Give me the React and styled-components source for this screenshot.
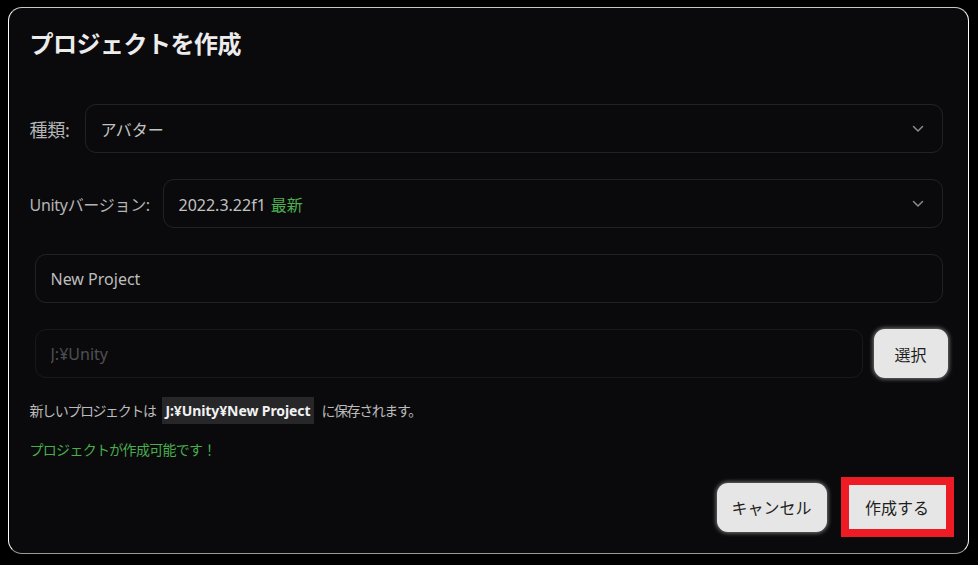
import React, { useState } from "react";
import styled, { createGlobalStyle } from "styled-components";

const GlobalStyle = createGlobalStyle`
  html, body {
    margin: 0;
    padding: 0;
    background: #000;
  }
  * {
    box-sizing: border-box;
  }
`;

const FONT = `"Noto Sans", "Noto Sans CJK JP", sans-serif`;

const Page = styled.div`
  width: 978px;
  height: 565px;
  padding: 7px 9px 11px 8px;
  background: #000;
  font-family: ${FONT};
`;

const Dialog = styled.div`
  width: 961px;
  height: 547px;
  background: #0a0a0c;
  border: 1.5px solid #ffffff;
  border-top-color: #c8c8c8;
  border-bottom-color: #9a9a9a;
  border-radius: 14px;
  padding: 20px 20.5px 0 20.5px;
  display: flex;
  flex-direction: column;
`;

const Title = styled.h1`
  margin: 0 0 44px 0;
  font-size: 24px;
  line-height: 32px;
  font-weight: 700;
  letter-spacing: -0.5px;
  color: #ececec;
`;

const FieldRow = styled.div`
  display: flex;
  align-items: center;
  gap: 10px;
  margin-right: 5px;
  margin-bottom: 26px;
`;

const Label = styled.span`
  flex: none;
  width: ${(p) => p.$w}px;
  font-size: ${(p) => p.$size || 16}px;
  letter-spacing: -0.3px;
  color: #b4b4b4;
  white-space: nowrap;
`;

const Select = styled.div`
  flex: 1;
  height: 49px;
  border: 1px solid #222226;
  border-radius: 11px;
  display: flex;
  align-items: center;
  justify-content: space-between;
  padding: 0 18px 0 15px;
  font-size: 16px;
  color: #c2c2c2;
`;

const Latest = styled.span`
  color: #4cae4f;
  margin-left: 5px;
`;

const TextInput = styled.input`
  flex: 1;
  width: 100%;
  height: 49px;
  background: transparent;
  border: 1px solid ${(p) => (p.$dim ? "#19191c" : "#222226")};
  border-radius: 11px;
  padding: 0 15px;
  font-family: ${FONT};
  font-size: 16px;
  color: #bdbdbd;
  outline: none;

  &::placeholder {
    color: #4f4f52;
  }
`;

const InputRow = styled.div`
  display: flex;
  align-items: center;
  gap: 11px;
  margin-left: 5px;
  margin-right: ${(p) => (p.$full ? "0" : "5px")};
  margin-bottom: ${(p) => (p.$full ? "19px" : "26px")};
`;

const LightButton = styled.button`
  height: 49px;
  width: ${(p) => p.$w}px;
  border: none;
  border-radius: 11px;
  background: #e6e6e6;
  box-shadow: 0 0 4px 1px rgba(255, 255, 255, 0.45);
  font-family: ${FONT};
  font-size: 16px;
  color: #1e1e1e;
  cursor: pointer;
`;

const InfoLine = styled.div`
  font-size: 14px;
  line-height: 27px;
  letter-spacing: -1.4px;
  color: #bbbbbb;
  display: flex;
  align-items: center;
`;

const Code = styled.span`
  display: inline-block;
  background: #27272a;
  color: #f2f2f2;
  font-weight: 700;
  letter-spacing: -0.1px;
  padding: 0 4px;
  margin: 0 7px 0 6px;
  height: 27px;
`;

const Status = styled.div`
  margin-top: 16px;
  font-size: 14px;
  line-height: 20px;
  letter-spacing: -0.7px;
  color: #49ad4c;
`;

const Footer = styled.div`
  margin-top: 17px;
  margin-right: -6px;
  display: flex;
  justify-content: flex-end;
  align-items: center;
  gap: 14px;
`;

const Highlight = styled.div`
  border: 8px solid #ed1c24;
  display: flex;
`;

const PrimaryButton = styled.button`
  width: 97px;
  height: 44px;
  border: none;
  background: #e6e6e6;
  font-family: ${FONT};
  font-size: 16px;
  color: #1e1e1e;
  cursor: pointer;
`;

const Chevron = () => (
  <svg width="12" height="8" viewBox="0 0 12 8" fill="none">
    <path d="M1.5 1.5 L6 6 L10.5 1.5" stroke="#8a8a8e" strokeWidth="1.5" strokeLinecap="round" strokeLinejoin="round" />
  </svg>
);

const App = () => {
  const [name, setName] = useState("New Project");
  const [path, setPath] = useState("");

  return (
    <Page>
      <GlobalStyle />
      <Dialog>
        <Title>プロジェクトを作成</Title>

        <FieldRow>
          <Label $w={45} $size={18}>種類:</Label>
          <Select>
            <span>アバター</span>
            <Chevron />
          </Select>
        </FieldRow>

        <FieldRow>
          <Label $w={123}>Unityバージョン:</Label>
          <Select>
            <span>
              2022.3.22f1<Latest>最新</Latest>
            </span>
            <Chevron />
          </Select>
        </FieldRow>

        <InputRow>
          <TextInput value={name} onChange={(e) => setName(e.target.value)} />
        </InputRow>

        <InputRow $full>
          <TextInput $dim placeholder="J:¥Unity" value={path} onChange={(e) => setPath(e.target.value)} />
          <LightButton $w={74}>選択</LightButton>
        </InputRow>

        <InfoLine>
          新しいプロジェクトは<Code>J:¥Unity¥New Project</Code>に保存されます。
        </InfoLine>

        <Status>プロジェクトが作成可能です！</Status>

        <Footer>
          <LightButton $w={110}>キャンセル</LightButton>
          <Highlight>
            <PrimaryButton>作成する</PrimaryButton>
          </Highlight>
        </Footer>
      </Dialog>
    </Page>
  );
};

export default App;
